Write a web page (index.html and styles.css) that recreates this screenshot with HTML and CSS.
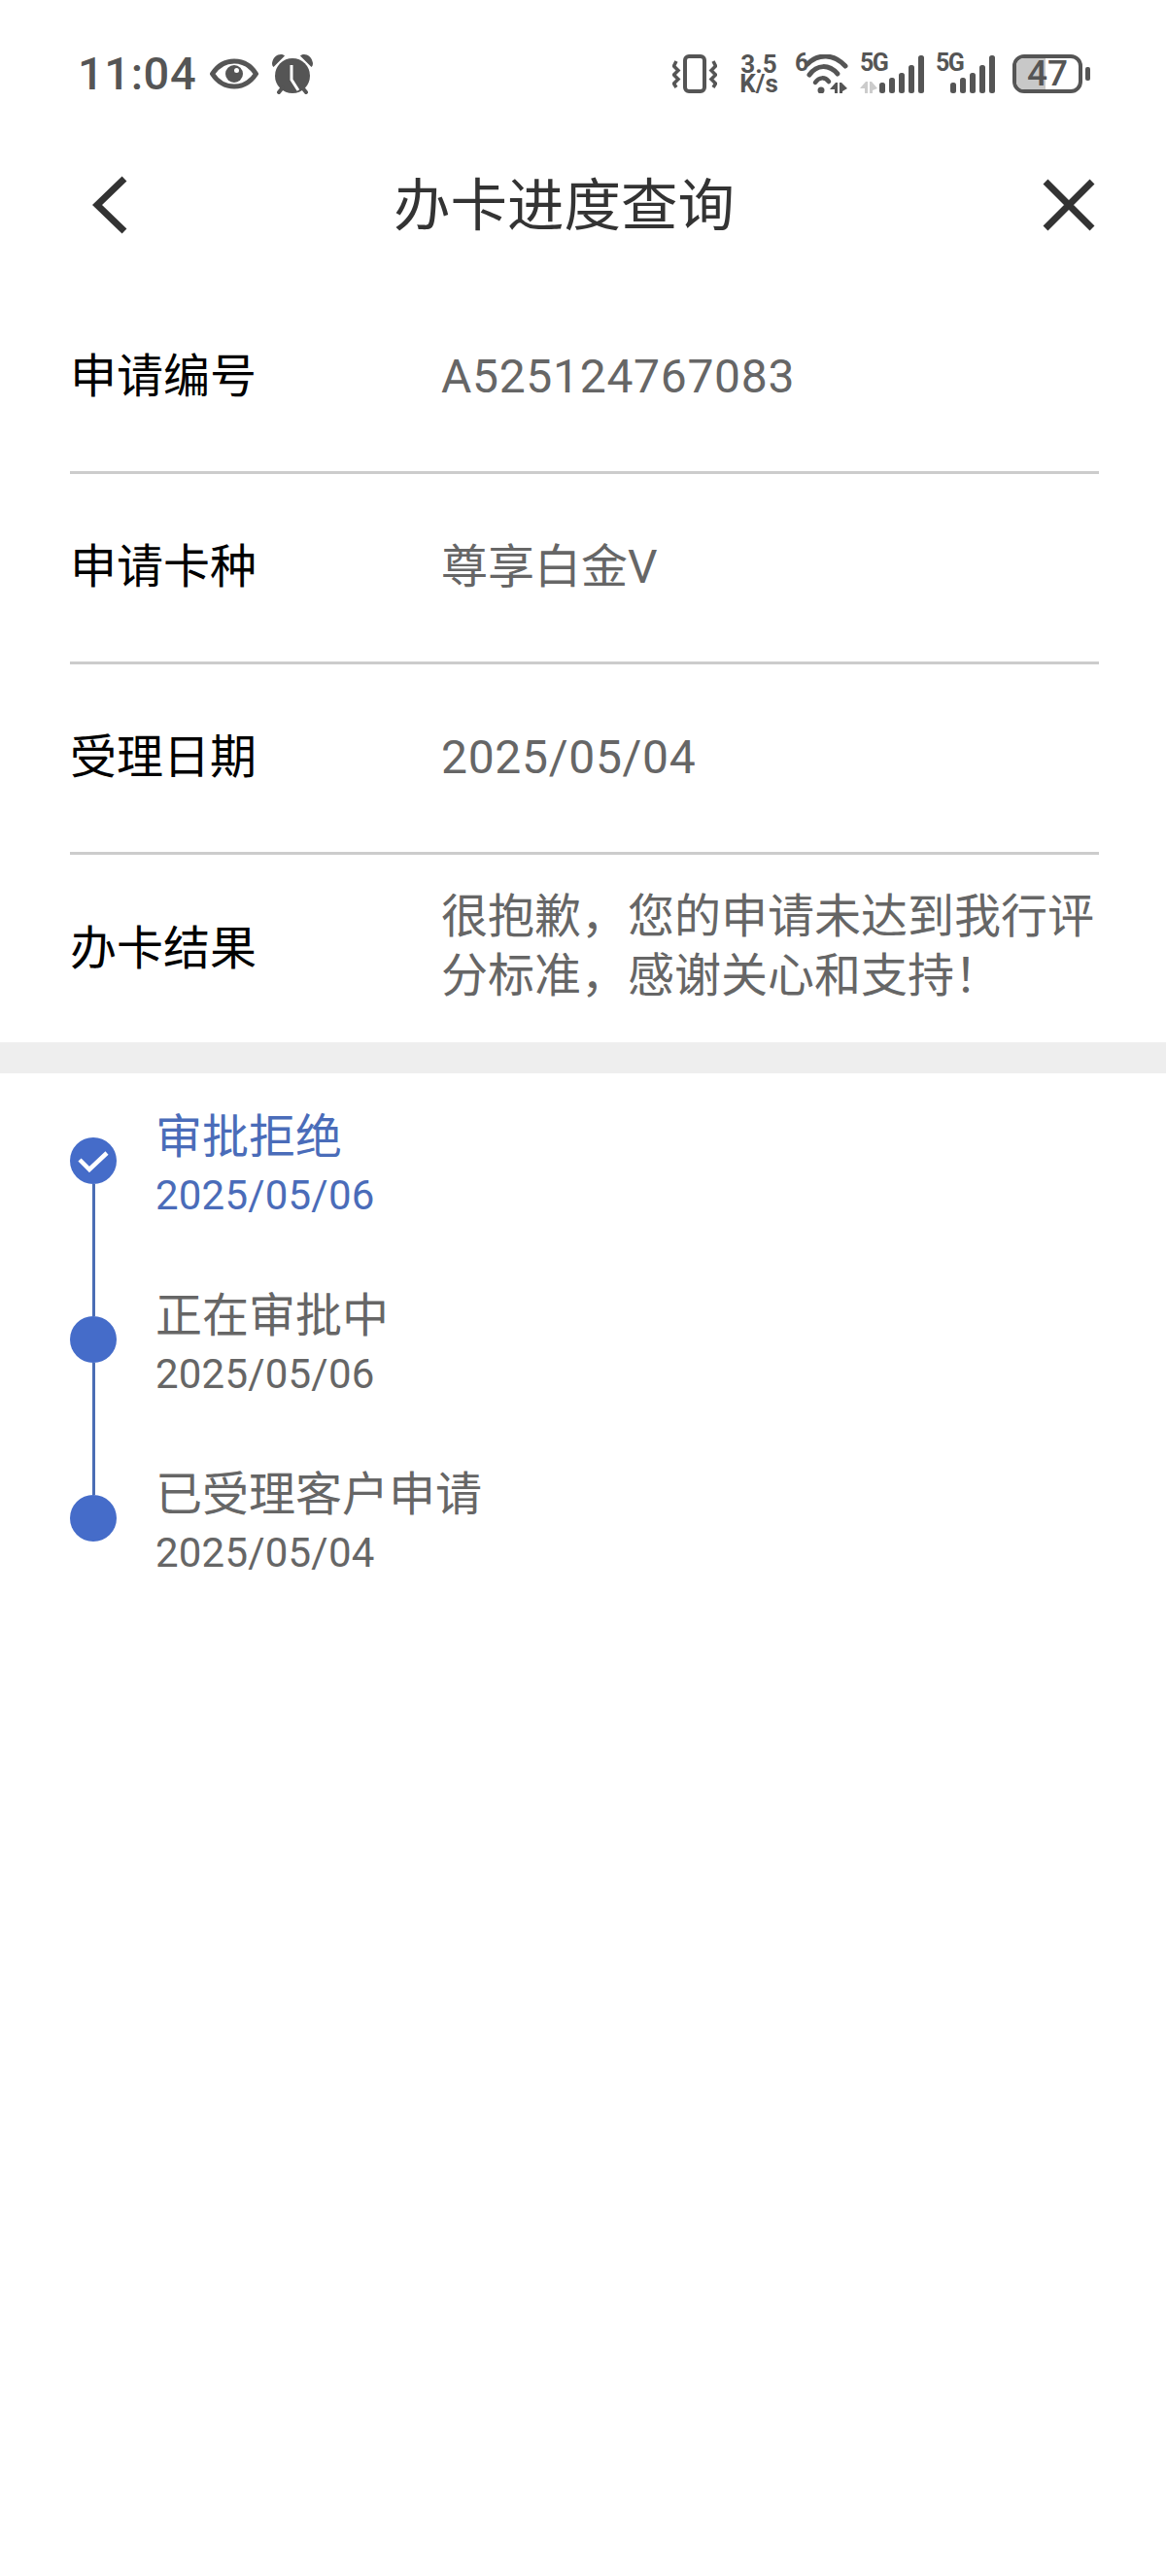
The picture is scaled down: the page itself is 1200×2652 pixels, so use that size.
FILE: index.html
```html
<!DOCTYPE html>
<html lang="zh-CN">
<head>
<meta charset="utf-8">
<title>办卡进度查询</title>
<link rel="stylesheet" href="styles.css">
</head>
<body>
<div class="page">
  <header class="status">
    <div class="status-left">
      <span class="clock">11:04</span>
      <svg class="ic-eye" width="50" height="32" viewBox="0 0 50 32"><path d="M2.500 16C8 7.500 16 3 25 3s17 4.500 22.500 13C42 24.500 34 29 25 29S8 24.500 2.500 16Z" fill="none" stroke="#555" stroke-width="5" stroke-linejoin="round"/><circle cx="25" cy="16" r="9" fill="#555"/><circle cx="27.500" cy="12.500" r="2.500" fill="#fff"/></svg>
      <svg class="ic-alarm" width="42" height="41" viewBox="0 0 42 41"><path d="M0 9C1 3 5 0 9 0c2 0 3 .5 4 1.500L1.500 13C.5 12 0 11 0 9ZM42 9c-1-6-5-9-9-9-2 0-3 .5-4 1.500L40.500 13c1-1 1.500-2 1.500-4Z" fill="#555"/><circle cx="21" cy="22" r="18" fill="#555"/><path d="M7 39l4-5M35 39l-4-5" stroke="#555" stroke-width="4" stroke-linecap="round"/><path d="M20 11v15l7 11" fill="none" stroke="#fff" stroke-width="3"/></svg>
    </div>
    <div class="status-right">
      <svg class="ic-vibrate" width="46" height="40" viewBox="0 0 46 40"><rect x="13" y="2" width="20" height="36" rx="4" fill="none" stroke="#555" stroke-width="4"/><path d="M4 7L1.500 12 6 16.500 1.500 21 6 25.500 1.500 30 4 34M42 7l2.500 5L40 16.500l4.500 4.500-4.500 4.500 4.500 4.500-2.500 4" fill="none" stroke="#555" stroke-width="3.500"/></svg>
      <div class="speed"><span>3.5</span><span>K/s</span></div>
      <div class="wifi">
        <span class="net-tag wifi-tag">6</span>
        <svg width="44" height="40" viewBox="0 0 44 40"><path d="M2 10C13-1 29-1 41 12" fill="none" stroke="#555" stroke-width="5" stroke-linecap="round"/><path d="M4 21C12 10 24 10 33 20" fill="none" stroke="#555" stroke-width="5" stroke-linecap="round"/><path d="M10 29c4-6 10-6 14-1" fill="none" stroke="#555" stroke-width="4.500" stroke-linecap="round"/><circle cx="16" cy="37" r="3.500" fill="#555"/><path d="M25 36l6-7h2v11h-3v-4ZM35 29h2l6 6-5 3v2h-3Z" fill="#555"/></svg>
      </div>
      <div class="signal">
        <span class="net-tag">5G</span>
        <svg width="66" height="40" viewBox="0 0 66 40"><path d="M0 35l6-7h2v12H5v-5ZM10 28h2l6 7-5 2v3h-3Z" fill="#ccc"/><rect x="20" y="29" width="6" height="11" rx="2.500" fill="#555"/><rect x="30" y="24" width="6" height="16" rx="2.500" fill="#555"/><rect x="40" y="19" width="6" height="21" rx="2.500" fill="#555"/><rect x="50" y="11" width="6" height="29" rx="2.500" fill="#555"/><rect x="60" y="1" width="6" height="39" rx="2.500" fill="#555"/></svg>
      </div>
      <div class="signal signal-b">
        <span class="net-tag">5G</span>
        <svg width="46" height="40" viewBox="0 0 46 40"><rect x="0" y="29" width="6" height="11" rx="2.500" fill="#555"/><rect x="10" y="24" width="6" height="16" rx="2.500" fill="#555"/><rect x="20" y="19" width="6" height="21" rx="2.500" fill="#555"/><rect x="30" y="11" width="6" height="29" rx="2.500" fill="#555"/><rect x="40" y="1" width="6" height="39" rx="2.500" fill="#555"/></svg>
      </div>
      <div class="battery">
        <div class="battery-body"><span class="battery-level" style="width:47%"></span><span class="battery-num">47</span></div>
        <span class="battery-nub"></span>
      </div>
    </div>
  </header>

  <nav class="nav">
    <button class="nav-btn back" type="button" aria-label="返回">
      <svg width="36" height="60" viewBox="0 0 36 60"><path d="M33 3L5 30l28 27" fill="none" stroke="#333" stroke-width="7"/></svg>
    </button>
    <h1 class="nav-title">办卡进度查询</h1>
    <button class="nav-btn close" type="button" aria-label="关闭">
      <svg width="54" height="54" viewBox="0 0 54 54"><path d="M3 3l48 48M51 3L3 51" fill="none" stroke="#333" stroke-width="7"/></svg>
    </button>
  </nav>

  <section class="details">
    <div class="row"><span class="label">申请编号</span><span class="value value-num">A525124767083</span></div>
    <div class="row"><span class="label">申请卡种</span><span class="value">尊享白金V</span></div>
    <div class="row"><span class="label">受理日期</span><span class="value value-num">2025/05/04</span></div>
    <div class="row row-result"><span class="label">办卡结果</span><span class="value">很抱歉，您的申请未达到我行评分标准，感谢关心和支持！</span></div>
  </section>

  <div class="band"></div>

  <ol class="timeline">
    <li class="step step-current">
      <div class="rail">
        <span class="seg seg-top seg-none"></span>
        <span class="dot"><svg width="34" height="24" viewBox="0 0 34 24"><path d="M3 11l10 10L31 4" fill="none" stroke="#fff" stroke-width="4.500"/></svg></span>
        <span class="seg seg-bottom"></span>
      </div>
      <div class="step-text"><div class="step-name">审批拒绝</div><div class="step-date">2025/05/06</div></div>
    </li>
    <li class="step">
      <div class="rail">
        <span class="seg seg-top"></span>
        <span class="dot"></span>
        <span class="seg seg-bottom"></span>
      </div>
      <div class="step-text"><div class="step-name">正在审批中</div><div class="step-date">2025/05/06</div></div>
    </li>
    <li class="step">
      <div class="rail">
        <span class="seg seg-top"></span>
        <span class="dot"></span>
        <span class="seg seg-bottom seg-none"></span>
      </div>
      <div class="step-text"><div class="step-name">已受理客户申请</div><div class="step-date">2025/05/04</div></div>
    </li>
  </ol>
</div>
</body>
</html>
```

FILE: styles.css
```css
* { box-sizing: border-box; }

html, body {
  margin: 0;
  padding: 0;
  background: #fff;
}

body {
  font-family: Roboto, "Noto Sans CJK SC", sans-serif;
}

.page {
  width: 1200px;
  height: 2652px;
  overflow: hidden;
  background: #fff;
}

/* status bar */
.status {
  height: 130px;
  padding: 56px 78px 0 80px;
  display: flex;
  justify-content: space-between;
  align-items: flex-start;
  color: #555;
}

.status-left,
.status-right {
  display: flex;
  align-items: flex-start;
}

.clock {
  font-size: 47px;
  line-height: 40px;
  font-weight: 500;
  width: 136px;
  letter-spacing: 0.6px;
}

.ic-eye { margin-top: 4px; }
.ic-alarm { margin-left: 14px; }

.speed {
  display: flex;
  flex-direction: column;
  width: 42px;
  margin-left: 22px;
  font-size: 26px;
  font-weight: 700;
  line-height: 20px;
  align-items: center;
}

.wifi {
  display: flex;
  margin-left: 16px;
  width: 55px;
}

.wifi-tag { width: 11px; flex: none; }

.wifi svg { flex: none; }

.net-tag {
  font-size: 25px;
  line-height: 18px;
  font-weight: 700;
  letter-spacing: -1.5px;
}

.signal {
  position: relative;
  display: flex;
  margin-left: 12px;
  width: 66px;
}

.signal .net-tag {
  position: absolute;
  left: 0;
  top: 0;
}

.signal svg { margin-left: auto; }

.signal-b { width: 61px; }

.battery {
  display: flex;
  align-items: center;
  margin-left: 18px;
}

.battery-body {
  position: relative;
  width: 72px;
  height: 40px;
  border: 4px solid #555;
  border-radius: 12px;
}

.battery-level {
  position: absolute;
  left: 0;
  top: 0;
  bottom: 0;
  background: #c8c8c8;
  border-radius: 8px 0 0 8px;
}

.battery-num {
  position: relative;
  display: block;
  text-align: center;
  font-size: 37px;
  line-height: 32px;
  font-weight: 500;
  color: #555;
}

.battery-nub {
  width: 5px;
  height: 14px;
  margin-left: 3px;
  background: #555;
  border-radius: 2px;
}

/* navigation */
.nav {
  height: 162px;
  padding: 0 73px 0 95px;
  display: flex;
  align-items: center;
  justify-content: space-between;
}

.nav-btn {
  display: flex;
  padding: 0;
  border: 0;
  background: none;
}

.nav-title {
  flex: 1;
  margin: 0 43px 0 0;
  padding-top: 2px;
  text-align: center;
  font-size: 58.500px;
  line-height: 76px;
  font-weight: 400;
  color: #333;
}

/* application details */
.details {
  padding: 0 69px 0 72px;
}

.row {
  height: 196px;
  display: flex;
  align-items: center;
  border-bottom: 3px solid #ccc;
  padding-bottom: 3px;
}

.label {
  width: 382px;
  flex: none;
  font-size: 48px;
  line-height: 61px;
  color: #000;
}

.value {
  flex: 1;
  font-size: 48px;
  line-height: 61px;
  color: #666;
}

.value-num { letter-spacing: 0.7px; }

.row-result {
  height: 193px;
  border-bottom: 0;
  padding-bottom: 0;
}

.row-result .value { margin-bottom: 6px; }

.band {
  height: 32px;
  background: #eee;
}

/* progress timeline */
.timeline {
  list-style: none;
  margin: 0;
  padding: 26px 0 0 72px;
}

.step {
  display: flex;
  height: 184px;
}

.rail {
  width: 48px;
  flex: none;
  display: flex;
  flex-direction: column;
  align-items: center;
}

.seg {
  width: 3px;
  background: #4a6db5;
}

.seg-top { flex: 0 0 40px; }
.seg-bottom { flex: 1; }
.seg-none { background: transparent; }

.dot {
  flex: none;
  width: 48px;
  height: 48px;
  border-radius: 50%;
  background: #456cc9;
  display: flex;
  align-items: center;
  justify-content: center;
}

.step-text {
  margin-left: 40px;
  padding-top: 10px;
  color: #666;
}

.step-name {
  font-size: 48px;
  line-height: 60px;
}

.step-date {
  font-size: 42px;
  line-height: 60px;
  letter-spacing: 0.2px;
}

.step-current .step-text {
  color: #4a6cb9;
}
```
